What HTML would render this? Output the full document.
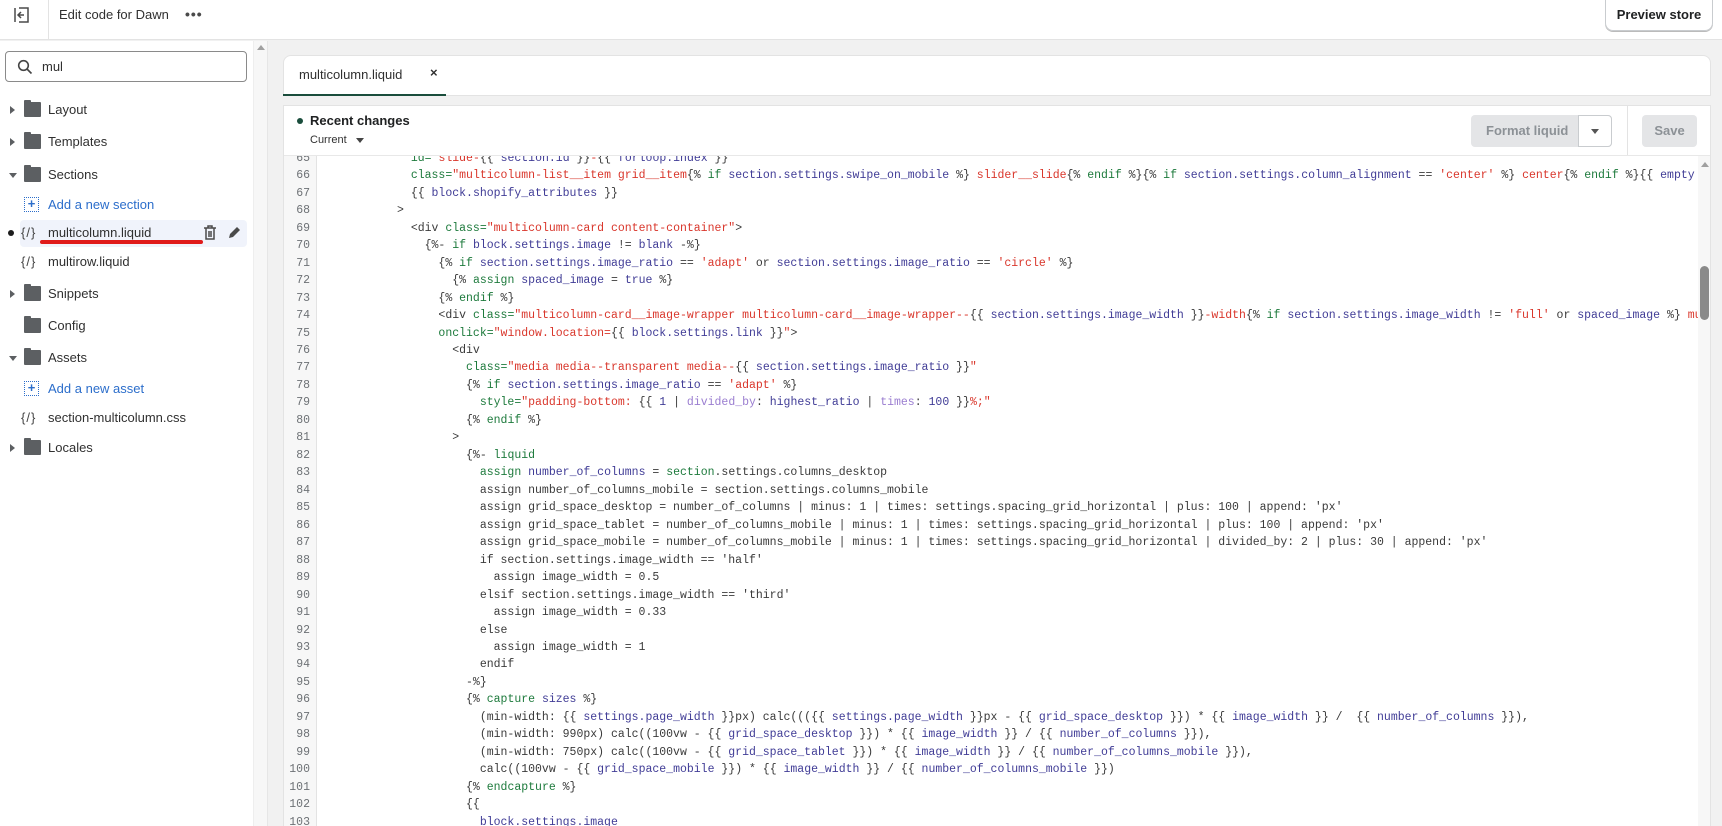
<!DOCTYPE html>
<html><head><meta charset="utf-8"><style>
*{box-sizing:border-box;margin:0;padding:0}
body{width:1722px;height:826px;overflow:hidden;background:#f1f1f1;font-family:"Liberation Sans",sans-serif;color:#303030;position:relative}
.abs{position:absolute}
#top{left:0;top:0;width:1722px;height:40px;background:#fff;border-bottom:1px solid #e3e3e3}
#side{left:0;top:41px;width:253px;height:785px;background:#fff}
#sscroll{left:253px;top:41px;width:15px;height:785px;background:#f7f7f7;border-left:1px solid #eee;border-right:1px solid #e6e6e6}
.row{position:absolute;left:0;font-size:13px;height:20px;line-height:20px}
.tri{position:absolute;left:10px;top:6px;width:0;height:0}
.tri.r{border-left:5px solid #5c5f62;border-top:4px solid transparent;border-bottom:4px solid transparent}
.tri.d{border-top:5px solid #5c5f62;border-left:4px solid transparent;border-right:4px solid transparent;top:8px;left:9px}
.fold{position:absolute;left:24px;top:2px;width:17px;height:15px;background:#5c5f62;border-radius:1px}
.fold:before{content:"";position:absolute;left:0;top:-2px;width:7px;height:3px;background:#5c5f62;border-radius:1px 1px 0 0}
.lbl{position:absolute;left:48px;white-space:nowrap}
.lnk{color:#2c6ecb}
.plus{position:absolute;left:24px;top:2px;width:15px;height:15px;border:1.5px dotted #2c6ecb;color:#2c6ecb;font-size:13px;line-height:11px;text-align:center;font-weight:bold}
.fi{position:absolute;left:21px;top:0;font-size:13px;color:#444;letter-spacing:1px}
#tabs{left:283px;top:55px;width:1428px;height:41px;background:#fff;border:1px solid #e3e3e3;border-radius:8px 8px 0 0}
#ed{left:283px;top:105px;width:1428px;height:721px;background:#fff;border:1px solid #e3e3e3;border-bottom:none;overflow:hidden}
#gut{left:0;top:50px;width:33px;height:680px;background:#f7f7f7;border-right:1px solid #e3e3e3}
#code{left:0;top:50px;width:1414px;height:680px;overflow:hidden}
.in{position:absolute;left:0;top:4px;width:1414px;height:680px}
.ln{position:absolute;left:0;width:26px;text-align:right;font-family:"Liberation Mono",monospace;font-size:11.5px;color:#6d7175}
.cl{position:absolute;left:44px;white-space:pre;font-family:"Liberation Mono",monospace;font-size:11.5px;color:#3a3a3a}
.k{color:#1d7a3c}.v{color:#403c96}.s{color:#d9362b}.f{color:#9a7dd0}
</style></head><body>
<div id="top" class="abs">
 <svg class="abs" style="left:13px;top:6px" width="18" height="18" viewBox="0 0 18 18" fill="none" stroke="#4a4a4a" stroke-width="1.5"><path d="M6 2h9v14H6"/><path d="M2 2v14"/><path d="M11 9H5M8 6L5 9l3 3"/></svg>
 <div class="abs" style="left:48px;top:0;width:1px;height:40px;background:#e3e3e3"></div>
 <div class="abs" style="left:59px;top:7px;font-size:13px;color:#303030">Edit code for Dawn</div>
 <div class="abs" style="left:185px;top:6px;font-size:14px;letter-spacing:1px;font-weight:bold;color:#4a4a4a">•••</div>
 <div class="abs" style="left:1605px;top:-2px;width:108px;height:33px;border:1px solid #c9cccf;border-radius:0 0 8px 8px;box-shadow:0 1px 0 #bbb;font-size:13px;font-weight:bold;text-align:center;line-height:31px;color:#202223">Preview store</div>
</div>
<div id="side" class="abs">
 <div class="abs" style="left:5px;top:10px;width:242px;height:31px;border:1px solid #8a8a8a;border-radius:4px;">
  <svg class="abs" style="left:11px;top:7px" width="16" height="16" viewBox="0 0 16 16" fill="none" stroke="#444" stroke-width="1.6"><circle cx="6.5" cy="6.5" r="4.8"/><path d="M10 10l4.5 4.5"/></svg>
  <div class="abs" style="left:36px;top:7px;font-size:13px">mul</div>
 </div>
</div>
<div class="row" style="top:100px;width:253px"><div class="tri r"></div><div class="fold"></div><div class="lbl">Layout</div></div>
<div class="row" style="top:132px;width:253px"><div class="tri r"></div><div class="fold"></div><div class="lbl">Templates</div></div>
<div class="row" style="top:165px;width:253px"><div class="tri d"></div><div class="fold"></div><div class="lbl">Sections</div></div>
<div class="row" style="top:195px;width:253px"><div class="plus">+</div><div class="lbl lnk">Add a new section</div></div>
<div class="abs" style="left:20px;top:220px;width:227px;height:27px;background:#f0f3fb;border-radius:4px"></div>
<div class="row" style="top:223px;width:253px"><div class="abs" style="left:8px;top:7px;width:6px;height:6px;border-radius:50%;background:#1c1c1c"></div><div class="fi">{/}</div><div class="lbl">multicolumn.liquid</div>
 <svg class="abs" style="left:203px;top:2px" width="14" height="15" viewBox="0 0 14 15" fill="none" stroke="#4a4a4a" stroke-width="1.5"><path d="M1 3h12M5 3V1h4v2M3 3v11h8V3M6 6v6M8 6v6"/></svg>
 <svg class="abs" style="left:227px;top:2px" width="15" height="15" viewBox="0 0 15 15"><path d="M2 13l1-4 7-7 3 3-7 7z" fill="#4a4a4a"/></svg>
</div>
<div class="abs" style="left:40px;top:240px;width:163px;height:4px;background:#e01b1b;border-radius:2px"></div>
<div class="row" style="top:252px;width:253px"><div class="fi">{/}</div><div class="lbl">multirow.liquid</div></div>
<div class="row" style="top:284px;width:253px"><div class="tri r"></div><div class="fold"></div><div class="lbl">Snippets</div></div>
<div class="row" style="top:316px;width:253px"><div class="fold"></div><div class="lbl">Config</div></div>
<div class="row" style="top:348px;width:253px"><div class="tri d"></div><div class="fold"></div><div class="lbl">Assets</div></div>
<div class="row" style="top:379px;width:253px"><div class="plus">+</div><div class="lbl lnk">Add a new asset</div></div>
<div class="row" style="top:408px;width:253px"><div class="fi">{/}</div><div class="lbl">section-multicolumn.css</div></div>
<div class="row" style="top:438px;width:253px"><div class="tri r"></div><div class="fold"></div><div class="lbl">Locales</div></div>
<div id="sscroll" class="abs"><div class="abs" style="left:3px;top:4px;border-bottom:5px solid #a0a0a0;border-left:4px solid transparent;border-right:4px solid transparent"></div></div>

<div id="tabs" class="abs">
 <div class="abs" style="left:15px;top:11px;font-size:13px">multicolumn.liquid</div>
 <div class="abs" style="left:146px;top:9px;font-size:13px;font-weight:bold">×</div>
 <div class="abs" style="left:-1px;top:38px;width:163px;height:2px;background:#1a4d3c"></div>
</div>
<div id="ed" class="abs">
 <div class="abs" style="left:13px;top:12px;width:6px;height:6px;border-radius:50%;background:#1a4d3c"></div>
 <div class="abs" style="left:26px;top:7px;font-size:13px;font-weight:bold;color:#202223">Recent changes</div>
 <div class="abs" style="left:26px;top:28px;font-size:11px">Current</div>
 <div class="abs" style="left:72px;top:32px;border-top:5px solid #444;border-left:4px solid transparent;border-right:4px solid transparent"></div>
 <div class="abs" style="left:1187px;top:9px;width:141px;height:32px;background:#e4e5e7;border-radius:4px;font-size:13px;font-weight:bold;color:#8c9196;line-height:32px;padding-left:15px">Format liquid</div>
 <div class="abs" style="left:1294px;top:9px;width:34px;height:32px;background:#fff;border:1px solid #c9cccf;border-radius:0 4px 4px 0"><div class="abs" style="left:12px;top:13px;border-top:5px solid #555;border-left:4px solid transparent;border-right:4px solid transparent"></div></div>
 <div class="abs" style="left:1343px;top:0;width:1px;height:50px;background:#e3e3e3"></div>
 <div class="abs" style="left:1358px;top:9px;width:55px;height:32px;background:#e4e5e7;border-radius:4px;font-size:13px;font-weight:bold;color:#8c9196;line-height:32px;text-align:center">Save</div>
 <div class="abs" style="left:0;top:49px;width:1428px;height:1px;background:#e8e8e8"></div>
 <div id="gut" class="abs"></div>
 <div id="code" class="abs"><div class="in">
<div class="ln" style="top:-8.3px">65</div><div class="cl" style="top:-8.3px">            <span class="k">id=</span><span class="s">"slide-</span>{{ <span class="v">section.id</span> }}<span class="s">-</span>{{ <span class="v">forloop.index</span> }}<span class="s">"</span></div>
<div class="ln" style="top:9.2px">66</div><div class="cl" style="top:9.2px">            <span class="k">class=</span><span class="s">"multicolumn-list__item grid__item</span>{% <span class="k">if</span> <span class="v">section.settings.swipe_on_mobile</span> %}<span class="s"> slider__slide</span>{% <span class="k">endif</span> %}{% <span class="k">if</span> <span class="v">section.settings.column_alignment</span> == <span class="s">'center'</span> %}<span class="s"> center</span>{% <span class="k">endif</span> %}{{ <span class="v">empty</span></div>
<div class="ln" style="top:26.7px">67</div><div class="cl" style="top:26.7px">            {{ <span class="v">block.shopify_attributes</span> }}</div>
<div class="ln" style="top:44.1px">68</div><div class="cl" style="top:44.1px">          &gt;</div>
<div class="ln" style="top:61.6px">69</div><div class="cl" style="top:61.6px">            &lt;div <span class="k">class=</span><span class="s">"multicolumn-card content-container"</span>&gt;</div>
<div class="ln" style="top:79.1px">70</div><div class="cl" style="top:79.1px">              {%- <span class="k">if</span> <span class="v">block.settings.image</span> != <span class="v">blank</span> -%}</div>
<div class="ln" style="top:96.6px">71</div><div class="cl" style="top:96.6px">                {% <span class="k">if</span> <span class="v">section.settings.image_ratio</span> == <span class="s">'adapt'</span> or <span class="v">section.settings.image_ratio</span> == <span class="s">'circle'</span> %}</div>
<div class="ln" style="top:114px">72</div><div class="cl" style="top:114px">                  {% <span class="k">assign</span> <span class="v">spaced_image</span> = <span class="v">true</span> %}</div>
<div class="ln" style="top:131.5px">73</div><div class="cl" style="top:131.5px">                {% <span class="k">endif</span> %}</div>
<div class="ln" style="top:149px">74</div><div class="cl" style="top:149px">                &lt;div <span class="k">class=</span><span class="s">"multicolumn-card__image-wrapper multicolumn-card__image-wrapper--</span>{{ <span class="v">section.settings.image_width</span> }}<span class="s">-width</span>{% <span class="k">if</span> <span class="v">section.settings.image_width</span> != <span class="s">'full'</span> or <span class="v">spaced_image</span> %}<span class="s"> multicolumn-card-spacing</span></div>
<div class="ln" style="top:166.5px">75</div><div class="cl" style="top:166.5px">                <span class="k">onclick=</span><span class="s">"window.location=</span>{{ <span class="v">block.settings.link</span> }}<span class="s">"</span>&gt;</div>
<div class="ln" style="top:183.9px">76</div><div class="cl" style="top:183.9px">                  &lt;div</div>
<div class="ln" style="top:201.4px">77</div><div class="cl" style="top:201.4px">                    <span class="k">class=</span><span class="s">"media media--transparent media--</span>{{ <span class="v">section.settings.image_ratio</span> }}<span class="s">"</span></div>
<div class="ln" style="top:218.9px">78</div><div class="cl" style="top:218.9px">                    {% <span class="k">if</span> <span class="v">section.settings.image_ratio</span> == <span class="s">'adapt'</span> %}</div>
<div class="ln" style="top:236.4px">79</div><div class="cl" style="top:236.4px">                      <span class="k">style=</span><span class="s">"padding-bottom: </span>{{ <span class="v">1</span> | <span class="f">divided_by</span>: <span class="v">highest_ratio</span> | <span class="f">times</span>: <span class="v">100</span> }}<span class="s">%;"</span></div>
<div class="ln" style="top:253.8px">80</div><div class="cl" style="top:253.8px">                    {% <span class="k">endif</span> %}</div>
<div class="ln" style="top:271.3px">81</div><div class="cl" style="top:271.3px">                  &gt;</div>
<div class="ln" style="top:288.8px">82</div><div class="cl" style="top:288.8px">                    {%- <span class="k">liquid</span></div>
<div class="ln" style="top:306.2px">83</div><div class="cl" style="top:306.2px">                      <span class="k">assign</span> <span class="v">number_of_columns</span> = <span class="k">section</span>.settings.columns_desktop</div>
<div class="ln" style="top:323.7px">84</div><div class="cl" style="top:323.7px">                      assign number_of_columns_mobile = section.settings.columns_mobile</div>
<div class="ln" style="top:341.2px">85</div><div class="cl" style="top:341.2px">                      assign grid_space_desktop = number_of_columns | minus: 1 | times: settings.spacing_grid_horizontal | plus: 100 | append: 'px'</div>
<div class="ln" style="top:358.7px">86</div><div class="cl" style="top:358.7px">                      assign grid_space_tablet = number_of_columns_mobile | minus: 1 | times: settings.spacing_grid_horizontal | plus: 100 | append: 'px'</div>
<div class="ln" style="top:376.1px">87</div><div class="cl" style="top:376.1px">                      assign grid_space_mobile = number_of_columns_mobile | minus: 1 | times: settings.spacing_grid_horizontal | divided_by: 2 | plus: 30 | append: 'px'</div>
<div class="ln" style="top:393.6px">88</div><div class="cl" style="top:393.6px">                      if section.settings.image_width == 'half'</div>
<div class="ln" style="top:411.1px">89</div><div class="cl" style="top:411.1px">                        assign image_width = 0.5</div>
<div class="ln" style="top:428.6px">90</div><div class="cl" style="top:428.6px">                      elsif section.settings.image_width == 'third'</div>
<div class="ln" style="top:446px">91</div><div class="cl" style="top:446px">                        assign image_width = 0.33</div>
<div class="ln" style="top:463.5px">92</div><div class="cl" style="top:463.5px">                      else</div>
<div class="ln" style="top:481px">93</div><div class="cl" style="top:481px">                        assign image_width = 1</div>
<div class="ln" style="top:498.4px">94</div><div class="cl" style="top:498.4px">                      endif</div>
<div class="ln" style="top:515.9px">95</div><div class="cl" style="top:515.9px">                    -%}</div>
<div class="ln" style="top:533.4px">96</div><div class="cl" style="top:533.4px">                    {% <span class="k">capture</span> <span class="v">sizes</span> %}</div>
<div class="ln" style="top:550.9px">97</div><div class="cl" style="top:550.9px">                      (min-width: {{ <span class="v">settings.page_width</span> }}px) calc((({{ <span class="v">settings.page_width</span> }}px - {{ <span class="v">grid_space_desktop</span> }}) * {{ <span class="v">image_width</span> }} /  {{ <span class="v">number_of_columns</span> }}),</div>
<div class="ln" style="top:568.3px">98</div><div class="cl" style="top:568.3px">                      (min-width: 990px) calc((100vw - {{ <span class="v">grid_space_desktop</span> }}) * {{ <span class="v">image_width</span> }} / {{ <span class="v">number_of_columns</span> }}),</div>
<div class="ln" style="top:585.8px">99</div><div class="cl" style="top:585.8px">                      (min-width: 750px) calc((100vw - {{ <span class="v">grid_space_tablet</span> }}) * {{ <span class="v">image_width</span> }} / {{ <span class="v">number_of_columns_mobile</span> }}),</div>
<div class="ln" style="top:603.3px">100</div><div class="cl" style="top:603.3px">                      calc((100vw - {{ <span class="v">grid_space_mobile</span> }}) * {{ <span class="v">image_width</span> }} / {{ <span class="v">number_of_columns_mobile</span> }})</div>
<div class="ln" style="top:620.8px">101</div><div class="cl" style="top:620.8px">                    {% <span class="k">endcapture</span> %}</div>
<div class="ln" style="top:638.2px">102</div><div class="cl" style="top:638.2px">                    {{</div>
<div class="ln" style="top:655.7px">103</div><div class="cl" style="top:655.7px">                      <span class="v">block.settings.image</span></div>
 </div></div>
 <div class="abs" style="left:1414px;top:50px;width:14px;height:680px;background:#f7f7f7"></div>
 <div class="abs" style="left:1417px;top:56px;border-bottom:5px solid #a0a0a0;border-left:4px solid transparent;border-right:4px solid transparent"></div>
 <div class="abs" style="left:1416px;top:160px;width:9px;height:54px;background:#8a8a8a;border-radius:5px"></div>
</div>
</body></html>
